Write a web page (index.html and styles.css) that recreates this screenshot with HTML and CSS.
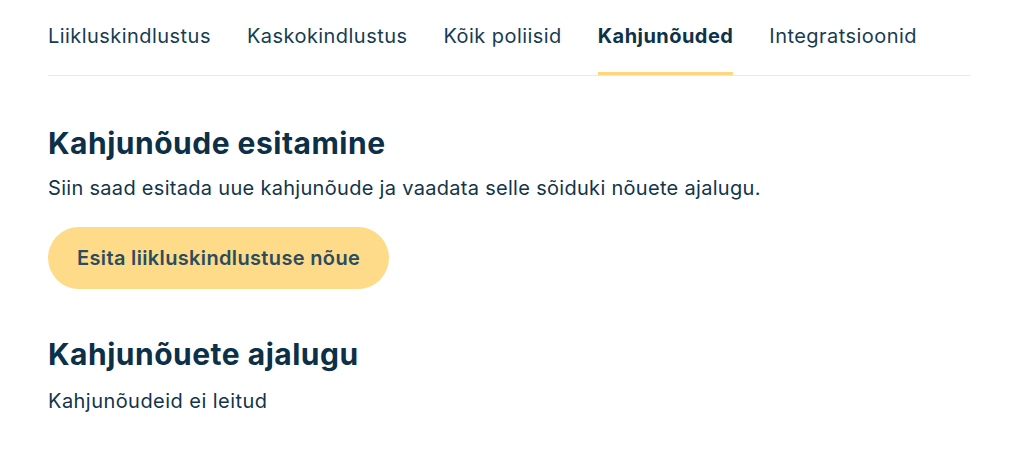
FILE: index.html
```html
<!DOCTYPE html>
<html lang="et">
<head>
<meta charset="utf-8">
<title>Kahjunõuded</title>
<link rel="stylesheet" href="styles.css">
</head>
<body>
<div class="page">
  <nav class="tabs">
    <a class="tab">Liikluskindlustus</a>
    <a class="tab">Kaskokindlustus</a>
    <a class="tab">Kõik poliisid</a>
    <a class="tab tab-active">Kahjunõuded</a>
    <a class="tab">Integratsioonid</a>
  </nav>
  <section class="section">
    <h1 class="title">Kahjunõude esitamine</h1>
    <p class="lead">Siin saad esitada uue kahjunõude ja vaadata selle sõiduki nõuete ajalugu.</p>
    <button class="btn">Esita liikluskindlustuse nõue</button>
  </section>
  <section class="section">
    <h2 class="title">Kahjunõuete ajalugu</h2>
    <p class="empty">Kahjunõudeid ei leitud</p>
  </section>
</div>
</body>
</html>
```
FILE: styles.css
```css
* { box-sizing: border-box; }
html, body { margin: 0; padding: 0; background: #fff; }
body {
  font-family: Inter, "Noto Sans", sans-serif;
  color: #0e3248;
}
.page {
  padding: 0 54px 0 48px;
  width: 1024px;
}
.tabs {
  display: flex;
  gap: 36px;
  border-bottom: 1px solid #e6e8eb;
  height: 76px;
}
.tab {
  display: flex;
  align-items: center;
  height: 75px;
  padding-bottom: 0;
  font-size: 20px;
  letter-spacing: 0.45px;
  color: #173c51;
  border-bottom: 3px solid transparent;
}
.tab-active {
  font-weight: 700;
  color: #0e3248;
  border-bottom-color: #fdd67d;
}
.section { display: flex; flex-direction: column; align-items: flex-start; }
.title {
  margin: 50px 0 0;
  font-size: 30px;
  line-height: 34px;
  letter-spacing: 0.5px;
  font-weight: 700;
  color: #0b3047;
}
.lead {
  margin: 15px 0 0;
  font-size: 20px;
  line-height: 26px;
  letter-spacing: 0.3px;
  color: #12354a;
}
.btn {
  margin-top: 26px;
  height: 62px;
  padding: 0 29px;
  border: none;
  border-radius: 31px;
  background: #fedb88;
  font-family: inherit;
  font-size: 20px;
  letter-spacing: 0.35px;
  font-weight: 600;
  color: #2b4c5f;
}
.section + .section .title { margin-top: 48px; }
.empty {
  margin: 17px 0 0;
  font-size: 20px;
  line-height: 26px;
  letter-spacing: 0.45px;
  color: #12354a;
}
```
